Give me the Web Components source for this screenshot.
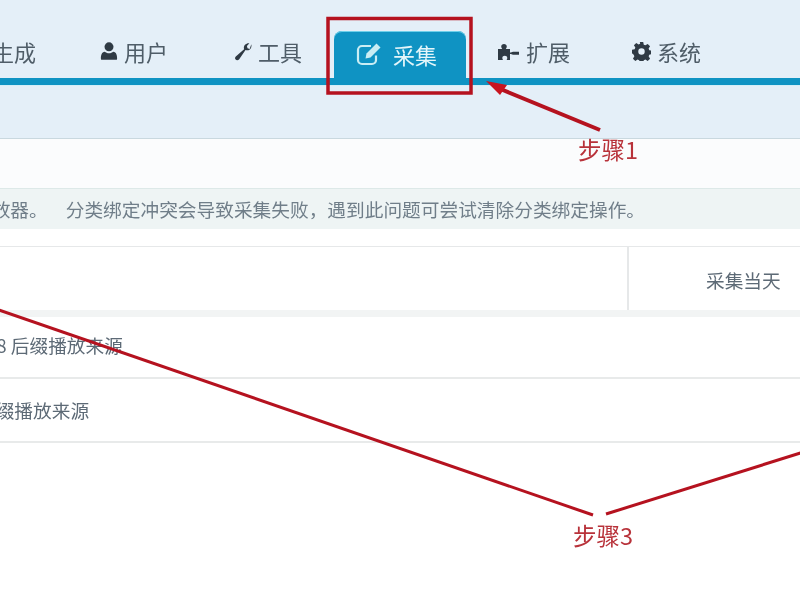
<!DOCTYPE html>
<html lang="zh">
<head>
<meta charset="utf-8">
<title>采集</title>
<style>
  html, body { margin: 0; height: 100%; background: #fff; overflow: hidden; }
  body { font-family: "Noto Sans CJK SC", "Liberation Sans", sans-serif; color: #56636f; }
  .page { position: relative; width: 800px; height: 600px; overflow: hidden; filter: blur(0.45px); }
  .strip { height: 49px; background: #fbfcfd; }
</style>
</head>
<body>
<div class="page">
  <top-nav>
    <nav-item style="margin-left:-40px">生成</nav-item>
    <nav-item icon="user">用户</nav-item>
    <nav-item icon="wrench" style="margin-left:2px">工具</nav-item>
    <nav-item icon="edit" active>采集</nav-item>
    <nav-item icon="puzzle" style="--gap:7px">扩展</nav-item>
    <nav-item icon="cog" style="margin-left:-2px">系统</nav-item>
  </top-nav>
  <div class="strip"></div>
  <notice-bar>
    <span style="margin-left:-27px">播放器。</span>
    <span>分类绑定冲突会导致采集失败，遇到此问题可尝试清除分类绑定操作。</span>
  </notice-bar>
  <data-table>
    <table-row slot="head" side="采集当天"></table-row>
    <table-row class="first"><span style="margin-left:-48px">.m3u8 后缀播放来源</span></table-row>
    <table-row class="second"><span style="margin-left:-23px">后缀播放来源</span></table-row>
  </data-table>
  <step-overlay></step-overlay>
</div>

<script>
const ICONS = {
  user: '<svg viewBox="0 0 18 20" width="18" height="18"><circle cx="9" cy="5.4" r="5" fill="#2f3a44"/><path d="M1 19.800c-.8 0-1-.6-1-1.400 0-4 1-7.400 4.200-7.600 1.200 1 2.900 1.700 4.800 1.700s3.600-.7 4.800-1.700c3.200.2 4.200 3.600 4.200 7.600 0 .8-.2 1.400-1 1.400z" fill="#2f3a44"/></svg>',
  wrench: '<svg viewBox="0 0 18 20" width="18" height="20"><path d="M17.300 3.300c.5 2.200-.1 4-1.500 5.100-1.300 1-2.900 1.100-4.300.6L5.200 18.200c-.8 1-2.600 1.300-3.500.4-.9-.8-.8-2.300.1-3.100l8.300-7.200c-.5-1.500-.3-3.200.9-4.500C12.100 2.700 13.900 2 15.400 2.300l-2.500 2.700.6 2.300 2.200.6z" fill="#2f3a44"/></svg>',
  edit: '<svg viewBox="0 0 27 24" width="27" height="24" fill="none"><path d="M20 13.500v4.500a4 4 0 0 1-4 4H6a4 4 0 0 1-4-4V8a4 4 0 0 1 4-4h9" stroke="#c9edf4" stroke-width="2.200"/><path d="M9.500 16.500l1-5L20.500 1.500l4 4-10 10z" fill="#c9edf4"/></svg>',
  puzzle: '<svg viewBox="0 0 21 18" width="21" height="18"><path d="M0 7h4.200c-.6-.9-1-1.500-1-2.500C3.200 3 4.400 2 6 2s2.800 1 2.800 2.500c0 1-.4 1.600-1 2.500H12v3.500h1c.8-.5 1.400-.8 2.200-.8h5.800v3h-5.800c-.8 0-1.400-.3-2.200-.8h-1V18H8.600c.4-.8.700-1.300.7-2 0-1.300-1.100-2.200-2.500-2.200S4.300 14.700 4.300 16c0 .7.300 1.200.7 2H0z" fill="#2f3a44"/></svg>',
  cog: '<svg viewBox="0 0 20 20" width="19" height="19"><path fill-rule="evenodd" d="M8.200 0h3.600l.6 2.800 1.700.7 2.400-1.500 2.500 2.500-1.500 2.400.7 1.700 2.800.6v3.600l-2.800.6-.7 1.700 1.500 2.400-2.500 2.500-2.400-1.500-1.700.7-.6 2.800H8.200l-.6-2.800-1.700-.7-2.400 1.500-2.500-2.500 1.500-2.400-.7-1.700L-.0 11.800V8.200l2.800-.6.700-1.700L2 3.500 4.500 1l2.400 1.500 1.700-.7zM10 6.600a3.400 3.400 0 1 0 0 6.800 3.400 3.400 0 0 0 0-6.800z" fill="#2f3a44"/></svg>'
};

class TopNav extends HTMLElement {
  constructor() {
    super();
    this.attachShadow({ mode: 'open' }).innerHTML = `
      <style>
        :host { display: block; height: 139px; box-sizing: border-box; padding-top: 31px;
                background: #e4eff8; border-bottom: 1px solid #c9d8df; }
        .bar { display: flex; align-items: flex-end; height: 54px; box-sizing: border-box;
               box-shadow: inset 0 -7px 0 #0f93c3, 0 1px 0 #d3eef8; }
      </style>
      <div class="bar"><slot></slot></div>`;
  }
}

class NavItem extends HTMLElement {
  constructor() {
    super();
    const name = this.getAttribute('icon');
    this.attachShadow({ mode: 'open' }).innerHTML = `
      <style>
        :host { display: flex; align-items: center; gap: var(--gap, 6px); height: 54px; box-sizing: border-box;
                padding: 0 32px 14px; font-size: 22px; line-height: 30px; color: #4f5d68; }
        :host([active]) { gap: 10px; padding: 0 29px 9px 22px; margin: 0; color: #e4f6fa;
                background: #0f93c3; border-radius: 8px 8px 0 0; box-shadow: inset 0 1px 0 #6fd0ea; }
        svg { display: block; }
        .icon { display: flex; }
      </style>
      ${name ? `<span class="icon">${ICONS[name]}</span>` : ''}<slot></slot>`;
  }
}

class NoticeBar extends HTMLElement {
  constructor() {
    super();
    this.attachShadow({ mode: 'open' }).innerHTML = `
      <style>
        :host { display: flex; align-items: center; gap: 18px; height: 41px;
                box-sizing: border-box; background: #eef4f4; border-top: 1px solid #dde9e8;
                font-size: 18.7px; line-height: 26px; color: #707e89; white-space: nowrap; }
      </style>
      <slot></slot>`;
  }
}

class DataTable extends HTMLElement {
  constructor() {
    super();
    this.attachShadow({ mode: 'open' }).innerHTML = `
      <style>
        :host { display: block; margin-top: 17px; border-top: 1px solid #e6e8e9; }
        .head { display: block; border-bottom: 7px solid #f2f4f4; }
        ::slotted(.first) { height: 62px; padding-bottom: 4px; }
        ::slotted(.second) { height: 64px; }
      </style>
      <div class="head"><slot name="head"></slot></div>
      <slot></slot>`;
  }
}

class TableRow extends HTMLElement {
  constructor() {
    super();
    const side = this.getAttribute('side');
    this.attachShadow({ mode: 'open' }).innerHTML = `
      <style>
        :host { display: flex; height: 63px; box-sizing: border-box; font-size: 18.7px;
                line-height: 26px; color: #5d6a76; white-space: nowrap; }
        :host(:not([slot])) { border-bottom: 2px solid #e8eaea; }
        .main { flex: 1; display: flex; align-items: center; }
        .side { width: 173px; box-sizing: border-box; padding: 2px 0 0 77px; display: flex;
                align-items: center; border-left: 2px solid #e6e8e9; }
      </style>
      <div class="main"><slot></slot></div>
      ${side ? `<div class="side">${side}</div>` : ''}`;
  }
}

class StepOverlay extends HTMLElement {
  constructor() {
    super();
    this.attachShadow({ mode: 'open' }).innerHTML = `
      <style>
        :host { position: absolute; inset: 0; display: block; pointer-events: none; }
        svg { position: absolute; inset: 0; }
        .step { position: absolute; font-size: 23.500px; line-height: 30px; color: #b8323a; white-space: nowrap; }
      </style>
      <svg width="800" height="600" fill="none" stroke="#b5121f">
        <rect x="328" y="18.500" width="143" height="74.500" stroke-width="3.500"/>
        <path d="M600 130L498 88" stroke-width="4"/>
        <path d="M486 81L507 85L500 95z" fill="#c8141f" stroke="none"/>
        <path d="M-10 307L593 515" stroke-width="3"/>
        <path d="M606 514L810 450" stroke-width="3"/>
      </svg>
      <span class="step" style="left:578px;top:134px">步骤1</span>
      <span class="step" style="left:573px;top:520px">步骤3</span>`;
  }
}

customElements.define('top-nav', TopNav);
customElements.define('nav-item', NavItem);
customElements.define('notice-bar', NoticeBar);
customElements.define('data-table', DataTable);
customElements.define('table-row', TableRow);
customElements.define('step-overlay', StepOverlay);
</script>
</body>
</html>
